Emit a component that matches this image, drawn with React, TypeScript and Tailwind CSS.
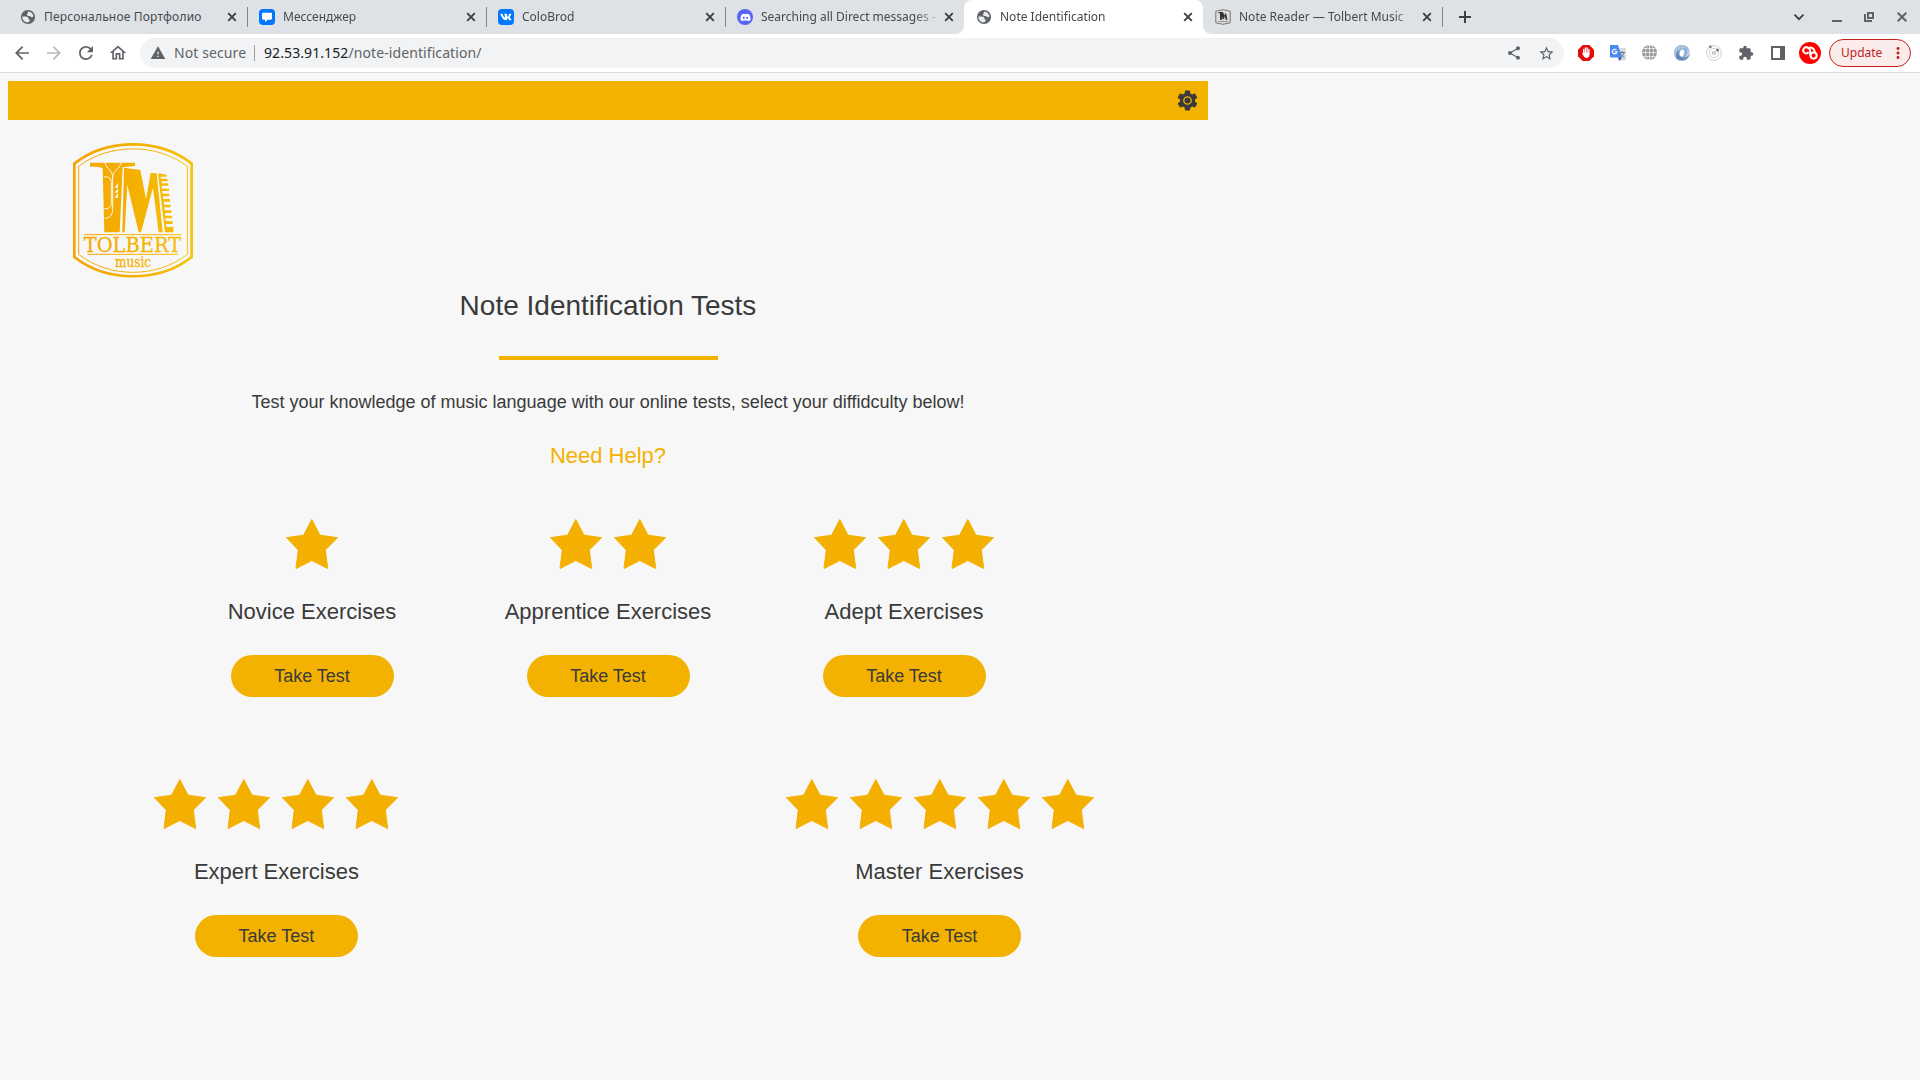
import React from "react";
import {
  MdArrowBack,
  MdArrowForward,
  MdRefresh,
  MdOutlineHome,
  MdWarning,
  MdShare,
  MdStarBorder,
  MdExtension,
  MdSettings,
  MdMoreVert,
} from "react-icons/md";
import { FaDiscord, FaVk } from "react-icons/fa";

function Globe() {
  return (
    <svg viewBox="0 0 16 16" className="size-4">
      <circle cx="8" cy="8" r="7.100" fill="#5f6368" />
      <path d="M8.300 2.600C11 2.700 13 4.700 13.500 7.400 12.300 8.200 11 8.500 10.600 7.600 10.300 6.900 9.500 6.900 8.400 6.900 7 6.800 6.600 5.700 7.300 5 8 4.400 7.400 3.500 8.300 2.600Z" fill="#e8eaed" />
      <path d="M2.300 7.600H5.600C7.500 7.600 8.500 8.400 8.500 9.700 8.500 10.700 10 10.400 9.800 11.500 9.600 12.600 8.300 13.300 7.200 13.500 4.300 13.200 2.200 10.700 2.300 7.600Z" fill="#e8eaed" />
    </svg>
  );
}

function MessengerIcon() {
  return (
    <svg viewBox="0 0 16 16" className="size-4">
      <rect width="16" height="16" rx="4" fill="#07f" />
      <path d="M4.300 3.700h7.400c.9 0 1.300.5 1.300 1.300v4.300c0 .9-.5 1.400-1.300 1.400H8.800L6 13v-2.300H4.300C3.500 10.700 3 10.200 3 9.300V5c0-.8.5-1.300 1.300-1.300z" fill="#fff" />
    </svg>
  );
}

function VkIcon() {
  return (
    <span className="flex size-4 items-center justify-center rounded-[4px] bg-[#0077ff]">
      <FaVk className="size-[12px] text-white" />
    </span>
  );
}

function DiscordIcon() {
  return (
    <span className="flex size-4 items-center justify-center rounded-full bg-[#5865f2]">
      <FaDiscord className="size-[11px] text-white" />
    </span>
  );
}

function TolbertFavicon() {
  return (
    <svg viewBox="0 0 16 16" className="size-4">
      <path d="M.8 2.200Q8-.8 15.200 2.200V13.800Q8 16.800.8 13.800Z" fill="#dcdcdc" stroke="#777" strokeWidth="1" />
      <path d="M3.500 3h4.500l1.300 3.500L10.800 3.500l1.700 7.200h-1.900l-.7-3.600-1.100 3.200H7.700L7 7.500v3.200H5V4.200H3.500z" fill="#333" />
      <path d="M3 12.500h10" stroke="#999" />
    </svg>
  );
}

type TabInfo = { title: string; icon: React.ReactNode; active?: boolean; sep?: boolean; wide?: boolean };

const tabs: TabInfo[] = [
  { title: "Персональное Портфолио", icon: <Globe />, wide: true },
  { title: "Мессенджер", icon: <MessengerIcon />, sep: true },
  { title: "ColoBrod", icon: <VkIcon />, sep: true },
  { title: "Searching all Direct messages -", icon: <DiscordIcon />, sep: true },
  { title: "Note Identification", icon: <Globe />, active: true },
  { title: "Note Reader — Tolbert Music", icon: <TolbertFavicon /> },
];

function Tab({ title, icon, active, sep, wide }: TabInfo) {
  return (
    <div className={active ? "relative flex h-[34px] w-[239px] items-center rounded-t-lg bg-white pl-3" : "relative flex h-[34px] w-[239px] items-center pl-3"}>
      {sep && <span className="absolute left-0 top-[7px] h-5 w-px bg-[#80868b]" />}
      {active && (
        <>
          <span className="absolute -left-2 bottom-0 size-2 bg-[radial-gradient(circle_at_0_0,#dee1e6_7.5px,#fff_8px)]" />
          <span className="absolute -right-2 bottom-0 size-2 bg-[radial-gradient(circle_at_100%_0,#dee1e6_7.5px,#fff_8px)]" />
        </>
      )}
      <span className="flex size-4 shrink-0 items-center justify-center">{icon}</span>
      <span
        className={
          wide
            ? "ml-2 w-[180px] shrink-0 whitespace-nowrap text-[12px] leading-[18px] tracking-[0.18px] text-[#45494d]"
            : "ml-2 w-[180px] shrink-0 whitespace-nowrap text-[12px] leading-[18px] text-[#45494d] [mask-image:linear-gradient(to_right,#000_154px,transparent_180px)]"
        }
      >
        {title}
      </span>
      <svg viewBox="0 0 10 10" className="ml-[3px] size-[10px] shrink-0" stroke="#3c4043" strokeWidth="1.900">
        <path d="M1.200 1.200 8.800 8.800M8.800 1.200 1.200 8.800" />
      </svg>
    </div>
  );
}

function TabStrip() {
  return (
    <div className="flex h-[34px] items-center bg-[#dee1e6] pl-2">
      {tabs.map((t) => (
        <Tab key={t.title} {...t} />
      ))}
      <span className="h-5 w-px bg-[#80868b]" />
      <svg viewBox="0 0 12 12" className="ml-4 size-3" stroke="#3c4043" strokeWidth="2">
        <path d="M6 0v12M0 6h12" />
      </svg>
      <div className="ml-auto flex items-center text-[#5f6368]">
        <svg viewBox="0 0 12 12" className="mr-[27px] size-3" fill="none" stroke="#3c4043" strokeWidth="1.800">
          <path d="M1.500 3.700 6 8.200 10.500 3.700" />
        </svg>
        <svg viewBox="0 0 10 10" className="mr-[22px] size-[10px]">
          <path d="M0 8h10v2H0z" fill="currentColor" />
        </svg>
        <svg viewBox="0 0 10 10" className="mr-[23px] size-[10px]" fill="none" stroke="currentColor" strokeWidth="2">
          <path d="M4 1h5v5H4z" />
          <path d="M1 2v7h7" />
        </svg>
        <svg viewBox="0 0 10 10" className="mr-[13px] size-[10px]" fill="none" stroke="currentColor" strokeWidth="2">
          <path d="M.7.7l8.600 8.600M9.300.7.7 9.300" />
        </svg>
      </div>
    </div>
  );
}

function AdblockIcon() {
  return (
    <svg viewBox="0 0 16 16" className="size-4">
      <path d="M4.700 0h6.600L16 4.700v6.600L11.300 16H4.700L0 11.300V4.700z" fill="#e40d0d" />
      <path d="M5.700 8V4.500M7.400 7.500V3M9.100 7.500V3M10.900 8.500V4.300" stroke="#fff" strokeWidth="1.300" strokeLinecap="round" />
      <path d="M4.200 8.300 5.200 7.500H11.500v2c0 2-1.200 3.500-3 3.500S5.500 11.500 4.200 8.300z" fill="#fff" />
    </svg>
  );
}

function TranslateIcon() {
  return (
    <svg viewBox="0 0 16 16" className="size-4">
      <path d="M6 3h10v12.500H9z" fill="#dcdcdc" />
      <path d="M9.500 7.500h5.500M12.200 6v1.500M14 7.500c-.5 2.500-2 4-3.500 5M10.800 8.500c.7 2 2 3.200 3.700 4" stroke="#607d8b" strokeWidth="1" fill="none" />
      <path d="M0 0h8l4 12.500H1c-.6 0-1-.4-1-1z" fill="#4a8af4" />
      <path d="M8 12.500h4L9.500 16z" fill="#2a56c6" />
      <path d="M6.400 5A2.300 2.300 0 1 0 7 6.800H4.800" fill="none" stroke="#fff" strokeWidth="1.200" />
    </svg>
  );
}

function GridGlobeIcon() {
  return (
    <svg viewBox="0 0 16 16" className="size-4">
      <circle cx="7.500" cy="7.500" r="7.500" fill="#999" />
      <path d="M7.500 0v15M0 7.500h15M1.500 3.500h12M1.500 11.500h12" stroke="#f0f0f0" strokeWidth=".8" />
      <ellipse cx="7.500" cy="7.500" rx="4" ry="7.500" fill="none" stroke="#f0f0f0" strokeWidth=".8" />
    </svg>
  );
}

function SwirlIcon() {
  return (
    <svg viewBox="0 0 16 16" className="size-4">
      <circle cx="8" cy="8" r="8" fill="#8fb0d2" />
      <path d="M8 0C3.500 0 0 3.500 0 8c0 2.500 1 4.500 3 6C1.500 9 4 4.500 8.500 3.500c2-.5 4 0 5 1C12.500 2 10.500 0 8 0z" fill="#a9c3dc" />
      <path d="M3 14c5 2.500 10.500 0 12.500-4.500C13.500 12.500 9 14 6 11.500 4.500 10 4 7 5 4.500 2 7 1.500 11 3 14z" fill="#5d87b5" />
      <path d="M13 4c1 2.500.5 6-2 8 3-.5 4.500-2 5-4 0-2-1-3.500-3-4z" fill="#c3d5e6" />
      <ellipse cx="8" cy="8" rx="2.200" ry="3.500" fill="#fff" transform="rotate(12 8 8)" />
    </svg>
  );
}

function OrbitIcon() {
  return (
    <svg viewBox="0 0 16 16" className="size-4" fill="none">
      <circle cx="8" cy="8" r="7.400" stroke="#d2d2d2" />
      <circle cx="8" cy="8" r="4.600" stroke="#d2d2d2" />
      <circle cx="8" cy="8" r="2.300" fill="#cfcfcf" />
      <circle cx="4.300" cy="1.800" r="1.500" fill="#8a8a8a" />
      <circle cx="11.500" cy="5" r="1.500" fill="#777" />
    </svg>
  );
}

function AvatarIcon() {
  return (
    <svg viewBox="0 0 22 22" className="size-[22px]" fill="none" stroke="#fff" strokeWidth="2">
      <circle cx="11" cy="11" r="11" fill="#f00" stroke="none" />
      <path d="M9.600 10.200A3 3 0 1 1 9 5.900C10.600 6.500 11.300 8 11.300 10V13.500" />
      <path d="M9.500 6.200C12 4.600 15.300 6.400 15.800 10" />
      <circle cx="14.600" cy="13.600" r="3.100" />
    </svg>
  );
}

function Toolbar() {
  return (
    <div className="flex h-[39px] items-center border-b border-[#d9dadc] bg-white text-[#5f6368]">
      <div className="flex w-[140px] shrink-0 items-center gap-[14px] pl-[13px]">
        <MdArrowBack className="size-[18px] scale-[1.16]" />
        <MdArrowForward className="size-[18px] scale-[1.16] text-[#babcbe]" />
        <MdRefresh className="size-[18px] scale-[1.16]" />
        <MdOutlineHome className="size-[18px] scale-[1.1]" />
      </div>
      <div className="flex h-[30px] w-[1424px] shrink-0 items-center rounded-full bg-[#f1f3f4] pl-[10px] text-[14px]">
        <MdWarning className="size-4" />
        <span className="ml-2 mb-[2px] w-[80px] whitespace-nowrap tracking-[0.1px]">Not secure</span>
        <span className="h-4 w-px bg-[#9aa0a6]" />
        <span className="mb-[2px] ml-[9px] whitespace-nowrap tracking-[0.09px]">
          <span className="text-[#202124]">92.53.91.152</span>/note-identification/
        </span>
        <MdShare className="ml-auto size-4" />
        <MdStarBorder className="ml-4 mr-[9px] size-[17px]" />
      </div>
      <div className="ml-[14px] flex items-center gap-4">
        <AdblockIcon />
        <TranslateIcon />
        <GridGlobeIcon />
        <SwirlIcon />
        <OrbitIcon />
        <MdExtension className="size-4" />
        <svg viewBox="0 0 16 16" className="size-4">
          <path d="M1 1h14v14H1zM3 3v10h7V3z" fill="currentColor" fillRule="evenodd" />
        </svg>
      </div>
      <div className="ml-[13px]">
        <AvatarIcon />
      </div>
      <div className="ml-2 flex h-7 w-[82px] items-center rounded-full border border-[#c5221f] bg-[#f9eceb] pl-[11px] text-[12px] text-[#c5221f]">
        <span>Update</span>
        <MdMoreVert className="ml-auto mr-[3px] size-[18px]" />
      </div>
    </div>
  );
}

function TolbertLogo() {
  return (
    <svg viewBox="0 0 450 477" className="ml-[60px] h-[159px] w-[150px]">
      <defs>
        <linearGradient id="gold" gradientUnits="userSpaceOnUse" x1="40" y1="0" x2="400" y2="0">
          <stop offset="0" stopColor="#f5a509" />
          <stop offset="0.500" stopColor="#f4b000" />
          <stop offset="1" stopColor="#f6c30c" />
        </linearGradient>
      </defs>
      <g fill="none" stroke="url(#gold)">
        <path d="M43 101C140 24 298 24 395 101V381C298 458 140 458 43 381Z" strokeWidth="8" />
        <path d="M56 109C148 39 290 39 382 109V373C290 445 148 445 56 373Z" strokeWidth="3" />
        <path d="M72 314H364M82 373H355" strokeWidth="3" />
      </g>
      <g fill="url(#gold)">
        <path d="M90 98H225V108L188 112 179 307H133L128 116C122 110 110 110 90 110Z" />
        <path d="M192 113 L241 120 258 207 272 129 290 130 308 307H296L279 173 243 307H236L202 165 194 307H187Z" />
        <path d="M294 130L320 134 319 140 302 140 303 146 322 146 323 154 304 154 305 160 325 160V167L305 167 306 176 327 176V183L307 183 308 191 328 191V199L309 199 310 207 330 207V215L311 215 312 224 332 224V232L313 232 314 241 334 241V249L315 249 316 257 336 257V265L316 265 317 273 338 274V282L318 282 319 291 340 291V307H315Z" />
      </g>
      <g fill="none" stroke="#f7f7f7" strokeWidth="3">
        <path d="M134 98C142 120 158 119 158 145V238C158 258 146 265 134 265M185 98C176 120 158 119 158 145" />
        <path d="M132 141C148 139 154 146 154 158V219C154 232 146 237 133 236" />
      </g>
      <path d="M164 173L174 160V173ZM164 188L174 175V188ZM164 203L174 190V203Z" fill="#f7f7f7" />
      <g fill="url(#gold)" stroke="url(#gold)" strokeWidth="0.800" fontFamily="DejaVu Serif, serif">
        <text x="71" y="365" fontSize="60" textLength="293" lengthAdjust="spacingAndGlyphs">TOLBERT</text>
        <text x="165" y="410" fontSize="44" textLength="108" lengthAdjust="spacingAndGlyphs">music</text>
      </g>
    </svg>
  );
}

function SettingsIcon() {
  return (
    <svg viewBox="0 0 25 25" className="size-[25px]">
      <MdSettings size={25} />
      <circle cx="12.500" cy="12.500" r="3.700" fill="#3a3a3a" stroke="#f4b200" strokeWidth="1.300" />
    </svg>
  );
}

function Star() {
  return (
    <svg viewBox="0 0 64 64" className="size-16">
      <path
        d="M31.800 7.500 40 23.200 57.500 25.700 45.300 38 47.700 56.500 31.800 48.500 16 56.500 18.300 38 6.500 25.700 23.600 23.200Z"
        fill="#f4b000"
        stroke="#f4b000"
        strokeWidth="1"
        strokeLinejoin="round"
      />
    </svg>
  );
}

function Exercise({ name, stars }: { name: string; stars: number }) {
  return (
    <div className="flex flex-col items-center">
      <div className="flex">
        {Array.from({ length: stars }, (_, i) => (
          <Star key={i} />
        ))}
      </div>
      <h2 className="mt-[22px] whitespace-nowrap text-[22px] leading-7">{name}</h2>
      <button className="mt-[29px] h-[42px] w-[163px] rounded-full bg-[#f4b200] text-[18px]">Take Test</button>
    </div>
  );
}

export default function App() {
  return (
    <div className="h-[1080px] w-[1920px] overflow-hidden bg-[#f7f7f7] font-['Noto_Sans',sans-serif]">
      <TabStrip />
      <Toolbar />
      <main className="w-[1216px] pt-2 font-['Liberation_Sans',Arial,sans-serif] text-[#3a3a3a]">
        <header className="mx-2 flex h-[39px] items-center justify-end bg-[#f4b200] pr-2">
          <SettingsIcon />
        </header>
        <div className="h-[10px]" />
        <TolbertLogo />
        <div className="flex flex-col items-center">
          <h1 className="mt-px text-[28px] leading-8">Note Identification Tests</h1>
          <div className="mt-[34px] h-1 w-[219px] bg-[#f4b200]" />
          <p className="mt-[30px] text-[18px] leading-6">
            Test your knowledge of music language with our online tests, select your diffidculty below!
          </p>
          <a className="mt-[28px] text-[22px] leading-7 text-[#f4b200]">Need Help?</a>
        </div>
        <section className="mt-[42px] grid grid-cols-3 px-[164px]">
          <Exercise name="Novice Exercises" stars={1} />
          <Exercise name="Apprentice Exercises" stars={2} />
          <Exercise name="Adept Exercises" stars={3} />
        </section>
        <section className="mt-[75px] flex justify-between pl-[148.45px] pr-[116.5px]">
          <Exercise name="Expert Exercises" stars={4} />
          <Exercise name="Master Exercises" stars={5} />
        </section>
      </main>
    </div>
  );
}
